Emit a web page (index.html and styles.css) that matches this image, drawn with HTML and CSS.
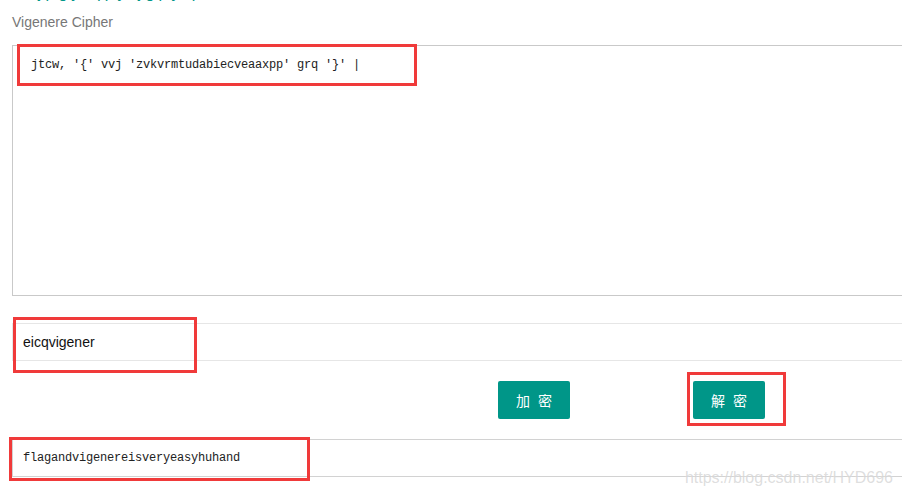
FILE: index.html
```html
<!DOCTYPE html>
<html lang="zh-CN">
<head>
    <meta charset="UTF-8">
    <meta name="viewport" content="width=device-width, initial-scale=1.0">
    <title>Vigenere Cipher</title>
    <link rel="stylesheet" href="styles.css">
</head>
<body>

    <div class="page">
        <!-- Site title (scrolled mostly out of view) -->
        <div class="site-title">
            <h2>jpgy qpy jgpy p</h2>
        </div>

        <!-- Cipher Form -->
        <form class="cipher-form">
            <label class="field-label">Vigenere Cipher</label>
            <textarea class="cipher-text" spellcheck="false">jtcw, '{' vvj 'zvkvrmtudabiecveaaxpp' grq '}' |</textarea>

            <input class="text-input key-input" type="text" value="eicqvigener" spellcheck="false">

            <div class="actions">
                <button type="button" class="btn">加 密</button>
                <button type="button" class="btn">解 密</button>
            </div>

            <div class="result">flagandvigenereisveryeasyhuhand</div>
        </form>

        <!-- Red highlight marks -->
        <span class="mark mark-cipher"></span>
        <span class="mark mark-key"></span>
        <span class="mark mark-decrypt"></span>
        <span class="mark mark-result"></span>

        <div class="watermark">https://blog.csdn.net/HYD696</div>
    </div>

</body>
</html>
```

FILE: styles.css
```css
/* General Styles */
* {
    margin: 0;
    padding: 0;
    box-sizing: border-box;
}

html, body {
    width: 902px;
    height: 496px;
    overflow: hidden;
}

body {
    font-family: 'Liberation Sans', 'Noto Sans CJK SC', sans-serif;
    background-color: #fff;
    color: #333;
}

.page {
    position: relative;
    width: 902px;
    height: 496px;
    padding-left: 12px;
}

/* Site Title */
.site-title {
    height: 3px;
    overflow: hidden;
    padding-left: 26px;
}

.site-title h2 {
    margin-top: -17px;
    font-size: 16px;
    line-height: 20px;
    font-weight: normal;
    letter-spacing: 4px;
    color: #009688;
    white-space: nowrap;
}

/* Cipher Form */
.cipher-form {
    width: 1000px;
    display: flex;
    flex-direction: column;
}

.field-label {
    margin-top: 9px;
    font-size: 14px;
    line-height: 20px;
    color: #777;
}

.cipher-text {
    margin-top: 13px;
    height: 251px;
    padding: 9px 18px;
    border: 1px solid #c9c9c9;
    border-right: none;
    font-family: 'Liberation Mono', 'Noto Sans CJK SC', monospace;
    font-size: 12px;
    letter-spacing: -0.2px;
    line-height: 20px;
    color: #222;
    resize: none;
    overflow: hidden;
    outline: none;
}

.text-input {
    height: 38px;
    padding-left: 10px;
    border: 1px solid #e6e6e6;
    border-right: none;
    font-family: 'Liberation Sans', sans-serif;
    font-size: 14px;
    color: #111;
    outline: none;
}

.key-input {
    margin-top: 27px;
}

/* Buttons */
.actions {
    display: flex;
    gap: 123px;
    margin-top: 20px;
    padding-left: 486px;
}

.btn {
    width: 72px;
    height: 38px;
    padding-left: 2px;
    border: none;
    border-radius: 2px;
    background-color: #009688;
    color: #fff;
    font-family: 'Liberation Sans', 'Noto Sans CJK SC', sans-serif;
    font-size: 14px;
    letter-spacing: 2px;
    white-space: pre;
    cursor: pointer;
}

/* Result */
.result {
    margin-top: 20px;
    height: 38px;
    padding-left: 10px;
    border: 1px solid #d2d2d2;
    border-right: none;
    font-family: 'Liberation Mono', monospace;
    font-size: 12px;
    letter-spacing: -0.2px;
    line-height: 36px;
    color: #222;
}

/* Highlight marks */
.mark {
    position: absolute;
    border: 3px solid #f03a3a;
    pointer-events: none;
}

.mark-cipher {
    left: 17px;
    top: 44px;
    width: 400px;
    height: 42px;
}

.mark-key {
    left: 13px;
    top: 317px;
    width: 184px;
    height: 56px;
}

.mark-decrypt {
    left: 687px;
    top: 372px;
    width: 99px;
    height: 54px;
}

.mark-result {
    left: 9px;
    top: 437px;
    width: 301px;
    height: 44px;
}

/* Watermark */
.watermark {
    position: absolute;
    right: 9px;
    top: 468px;
    font-family: 'Liberation Sans', sans-serif;
    font-size: 16px;
    line-height: 20px;
    color: rgba(170, 170, 170, 0.4);
    text-shadow: 0 0 1px rgba(255, 255, 255, 0.8);
}
```
